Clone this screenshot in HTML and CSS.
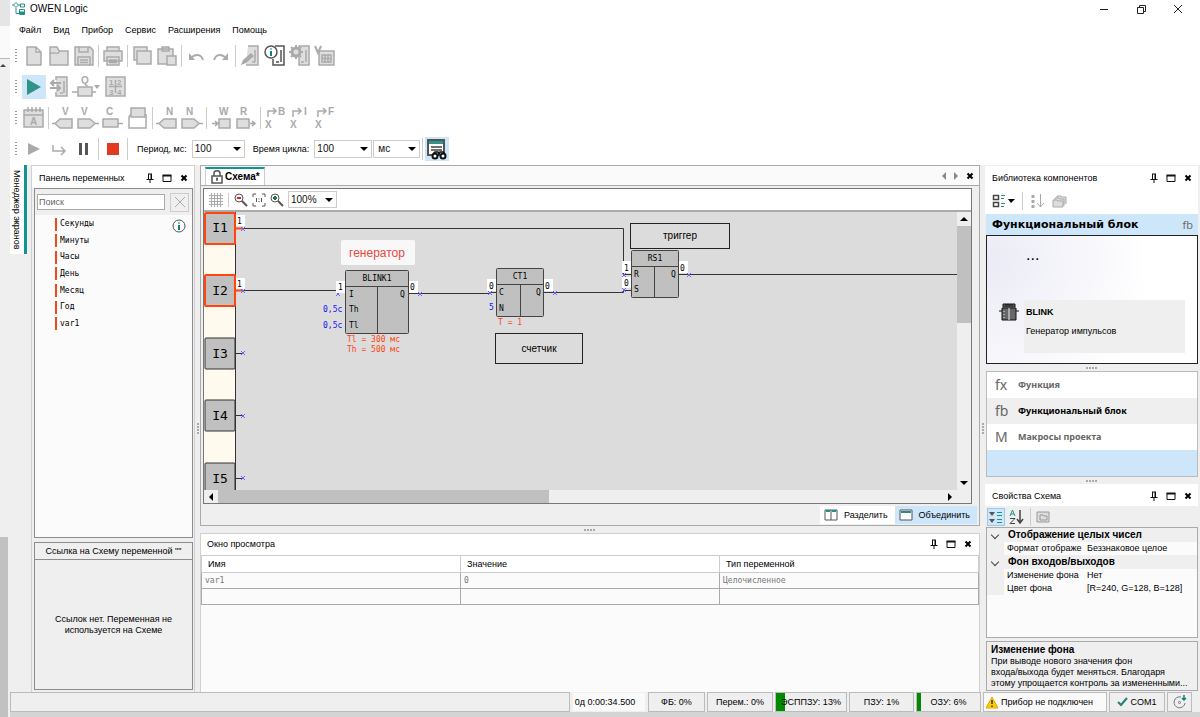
FILE: index.html
```html
<!DOCTYPE html>
<html lang="ru">
<head>
    <meta charset="UTF-8">
    <meta name="viewport" content="width=device-width, initial-scale=1.0">
    <title>OWEN Logic</title>
    <link rel="stylesheet" href="styles.css">
</head>
<body>
    <!-- shared icons -->
    <svg class="defs" width="0" height="0">
        <symbol id="pin" viewBox="0 0 10 10"><path d="M3 1h4M3.5 1v5M6.5 1v5M1.5 6.5h7M5 6.5V10" fill="none" stroke="#111"/><path d="M5.5 1h1v5h-1z" fill="#111"/></symbol>
        <symbol id="max" viewBox="0 0 10 10"><path d="M1 2.5h8v6H1z" fill="none" stroke="#111"/><path d="M.5 1.5h9v2h-9z" fill="#111"/></symbol>
        <symbol id="close" viewBox="0 0 10 10"><path d="M2.5 2.5l5 5M7.5 2.5l-5 5" stroke="#000" stroke-width="2"/></symbol>
        <symbol id="x" viewBox="0 0 6 6"><path d="M1 1l4 4M5 1L1 5" stroke="#66f"/></symbol>
    </svg>
    <div class="desktop">
        <div class="outer">
            <div class="outer-top"></div>
            <div class="outer-mid"></div>
            <svg class="outer-arrow" width="8" height="8"><path d="M0 6h6L3 3z" fill="#444"/></svg>
            <div class="outer-thumb"></div>
        </div>
        <div class="window">
            <header class="titlebar">
                <svg width="14" height="14" viewBox="0 0 14 14" fill="none" stroke="#259088"><path d="M4 .5L6.500 3 4 5.500 1.500 3zM0 3h1.500M6.500 3H8M8.500 2h4v3h-4zM4 6v5.500h3M7.500 7.500h5v5h-5z"/><path d="M8 10h4v2H8z" fill="#259088"/></svg>
                <span class="title">OWEN Logic</span>
                <button class="win-btn" aria-label="Свернуть"><svg width="12" height="12"><path d="M2 6.500h8" stroke="#222"/></svg></button>
                <button class="win-btn" aria-label="Восстановить"><svg width="12" height="12" fill="none" stroke="#222"><path d="M2.500 4.500h6v6h-6zM4.500 4V2.500h6v6H9"/></svg></button>
                <button class="win-btn" aria-label="Закрыть"><svg width="12" height="12"><path d="M2 2l8 8M10 2l-8 8" stroke="#222"/></svg></button>
            </header>
            <nav class="menu">
                <button>Файл</button>
                <button>Вид</button>
                <button>Прибор</button>
                <button>Сервис</button>
                <button>Расширения</button>
                <button>Помощь</button>
            </nav>

            <div class="toolbar">
                <span class="grip"></span>
                <button class="tool" aria-label="Новый"><svg viewBox="0 0 24 24"><path d="M5 3h9l5 5v13H5zM14 3v5h5"/></svg></button>
                <button class="tool" aria-label="Открыть"><svg viewBox="0 0 24 24"><path d="M3 21V3h7l2 4h9v14zM3 9h8l2-2"/></svg></button>
                <button class="tool" aria-label="Сохранить"><svg viewBox="0 0 24 24"><path d="M3 3h15l3 3v15H3zM7 3h9v5H7zM6 13h12v8H6zM8 16h8M8 18.500h8"/></svg></button>
                <span class="sep"></span>
                <button class="tool" aria-label="Печать"><svg viewBox="0 0 24 24"><path d="M6 3h12v4H6zM3 7h18v10H3zM6 13h12v8H6zM8 16h8M8 18.500h8"/></svg></button>
                <span class="sep"></span>
                <button class="tool" aria-label="Копировать"><svg viewBox="0 0 24 24"><path d="M4 3h13v13H4z"/><path d="M7 7h14v13H7z"/></svg></button>
                <button class="tool" aria-label="Вставить"><svg viewBox="0 0 24 24"><path d="M3 5h15v15H3zM7 3h7v4H7z"/><path d="M12 12h9v9h-9z"/></svg></button>
                <span class="sep"></span>
                <button class="tool" aria-label="Отменить"><svg viewBox="0 0 24 24"><path d="M19 16c-2-6-7-6-11-3" fill="none" stroke-width="2"/><path d="M5 9v7h6z" class="solid"/></svg></button>
                <button class="tool" aria-label="Повторить"><svg viewBox="0 0 24 24"><path d="M5 16c2-6 7-6 11-3" fill="none" stroke-width="2"/><path d="M19 9v7h-6z" class="solid"/></svg></button>
                <span class="sep"></span>
                <button class="tool" aria-label="Записать"><svg viewBox="0 0 24 24"><path d="M10 2h10v19H8M17 6v12M14 18h3"/><path d="M3 21l2-5 8-7 3 3-8 7z" class="solid"/></svg></button>
                <button class="tool dark" aria-label="Информация о приборе"><svg viewBox="0 0 24 24"><path d="M12 2h9v19H10v-6M18 6v12M13 18h3"/><circle cx="8" cy="8" r="6" fill="#fff"/><path d="M8 7v5M8 4.500v1" stroke="#108080" stroke-width="2"/></svg></button>
                <button class="tool" aria-label="Настройка прибора"><svg viewBox="0 0 24 24"><path d="M11 2h10v19H11zM18 6v12M13 18h3"/><circle cx="8" cy="8" r="4" stroke-width="3"/><path d="M8 1v3M8 12v3M1 8h3M12 8h3M3 3l2 2M11 11l2 2M13 3l-2 2M3 13l2-2" stroke-width="2"/></svg></button>
                <button class="tool" aria-label="Таблица переменных"><svg viewBox="0 0 24 24"><path d="M6 7h15v14H6zM9 11h9v7H9zM9 14.500h9M12 11v7M15 11v7"/><path d="M2 2l3 7 3-7" fill="none" stroke-width="2"/></svg></button>
            </div>
            <div class="toolbar">
                <span class="grip"></span>
                <button class="tool on" aria-label="Симуляция"><svg viewBox="0 0 24 24"><path d="M5 4l14 8-14 8z" class="teal"/></svg></button>
                <button class="tool" aria-label="Обмен"><svg viewBox="0 0 24 24"><path d="M9 5V2h11v19H9v-4M17 6v12M13 18h3"/><path d="M4 8h10M7 5L4 8l3 3M3 13h10M10 10l3 3-3 3" fill="none" stroke-width="2"/></svg></button>
                <button class="tool wide" aria-label="Выход"><svg viewBox="0 0 30 24"><path d="M0 17h6M19 17h5"/><path d="M6 12h14v9H6z"/><path d="M22 10h6l-3 4z" class="solid"/><text x="9" y="9">Q</text></svg></button>
                <button class="tool" aria-label="Разряды"><svg viewBox="0 0 24 24"><path d="M3 2h19v19H3zM12.500 5v13M6 11.500h13"/><g class="small"><text x="6" y="10">1</text><text x="14" y="10">2</text><text x="6" y="20">3</text><text x="14" y="20">4</text></g></svg></button>
            </div>
            <div class="toolbar">
                <span class="grip"></span>
                <button class="tool" aria-label="Календарь"><svg viewBox="0 0 24 24"><path d="M2 4h19v17H2zM2 9h19M6 1v5M10 1v5M14 1v5M18 1v5"/><text x="8" y="19">A</text></svg></button>
                <span class="sep"></span>
                <button class="tool" aria-label="Входная переменная"><svg viewBox="0 0 24 24"><path d="M21 13H9l-5 4.500L9 22h12zM1 17.500h3"/><text x="11" y="9">V</text></svg></button>
                <button class="tool" aria-label="Выходная переменная"><svg viewBox="0 0 24 24"><path d="M2 13h12l5 4.500-5 4.500H2zM19 17.500h4"/><text x="5" y="9">V</text></svg></button>
                <button class="tool" aria-label="Константа"><svg viewBox="0 0 24 24"><path d="M2 13h15v8H2zM17 17.500h5"/><text x="5" y="9">C</text></svg></button>
                <button class="tool" aria-label="Комментарий"><svg viewBox="0 0 24 24"><path d="M5 8L3 11v11h17V8" fill="#fff"/><path d="M5 2h14v9H5z"/></svg></button>
                <span class="sep"></span>
                <button class="tool" aria-label="Сетевой вход"><svg viewBox="0 0 24 24"><path d="M21 13H9l-5 4.500L9 22h12zM1 17.500h3"/><text x="11" y="9">N</text></svg></button>
                <button class="tool" aria-label="Сетевой выход"><svg viewBox="0 0 24 24"><path d="M2 13h12l5 4.500-5 4.500H2zM19 17.500h4"/><text x="6" y="9">N</text></svg></button>
                <span class="sep"></span>
                <button class="tool" aria-label="Запись"><svg viewBox="0 0 24 24"><path d="M10 13h11v9H10zM3 17.500h6M6 15l3 2.500L6 20"/><text x="10" y="9">W</text></svg></button>
                <button class="tool" aria-label="Чтение"><svg viewBox="0 0 24 24"><path d="M3 13h12v9H3zM16 17.500h5M18 15l3 2.500-3 2.500"/><text x="6" y="9">R</text></svg></button>
                <span class="sep"></span>
                <button class="tool" aria-label="Преобразовать в BOOL"><svg viewBox="0 0 24 24"><path d="M5 11V5h8M10 2l3 3-3 3" fill="none"/><text x="15" y="9">B</text><text x="2" y="22">X</text></svg></button>
                <button class="tool" aria-label="Преобразовать в INT"><svg viewBox="0 0 24 24"><path d="M5 11V5h8M10 2l3 3-3 3" fill="none"/><text x="16" y="9">I</text><text x="2" y="22">X</text></svg></button>
                <button class="tool" aria-label="Преобразовать в FLOAT"><svg viewBox="0 0 24 24"><path d="M5 11V5h8M10 2l3 3-3 3" fill="none"/><text x="15" y="9">F</text><text x="2" y="22">X</text></svg></button>
            </div>
            <div class="toolbar">
                <span class="grip"></span>
                <button class="tool" aria-label="Пуск"><svg viewBox="0 0 24 24"><path d="M6 6l12 6-12 6z" class="solid"/></svg></button>
                <button class="tool" aria-label="Шаг"><svg viewBox="0 0 24 24"><path d="M6 8v6h12M14 10l4 4-4 4" fill="none"/></svg></button>
                <button class="tool" aria-label="Пауза"><svg viewBox="0 0 24 24"><path d="M8.500 6v12M14.500 6v12" stroke="#555" stroke-width="3"/></svg></button>
                <span class="sep"></span>
                <button class="tool" aria-label="Стоп"><svg viewBox="0 0 24 24"><path d="M6 6h12v12H6z" class="red"/></svg></button>
                <span class="sep"></span>
                <label class="tool-label" for="period">Период, мс:</label>
                <select id="period" class="combo period"><option>100</option></select>
                <label class="tool-label" for="cycle">Время цикла:</label>
                <select id="cycle" class="combo cycle"><option>100</option></select>
                <select class="combo unit" aria-label="Единица времени"><option>мс</option></select>
                <span class="sep"></span>
                <button class="tool on" aria-label="Окно просмотра"><svg viewBox="0 0 24 24"><path d="M3 3h16v15H3z" fill="#fff" stroke="#555" stroke-width="2"/><path d="M4 4h14v3H4z" class="teal"/><path d="M6 10h11M6 13h11" stroke="#444"/><path d="M8 17l2-2h3l1 2 1-2h3l2 2" fill="none" stroke="#111"/><circle cx="10" cy="19" r="2.500" fill="#fff" stroke="#111" stroke-width="2"/><circle cx="18" cy="19" r="2.500" fill="#fff" stroke="#111" stroke-width="2"/></svg></button>
            </div>

            <main class="main">
                <button class="side-tab">Менеджер экранов</button>

                <section class="dock vars">
                    <div class="panel-head">
                        <h2>Панель переменных</h2>
                        <button aria-label="Закрепить"><svg><use href="#pin"/></svg></button>
                        <button aria-label="Развернуть"><svg><use href="#max"/></svg></button>
                        <button aria-label="Закрыть"><svg><use href="#close"/></svg></button>
                    </div>
                    <div class="box var-box">
                        <div class="search">
                            <input type="text" placeholder="Поиск" aria-label="Поиск">
                            <button class="clear" aria-label="Очистить"><svg width="14" height="14"><path d="M2 2l10 10M12 2L2 12" stroke="#aaa"/></svg></button>
                        </div>
                        <div class="var-body">
                            <ul class="var-list">
                                <li>Секунды</li>
                                <li>Минуты</li>
                                <li>Часы</li>
                                <li>День</li>
                                <li>Месяц</li>
                                <li>Год</li>
                                <li>var1</li>
                            </ul>
                            <svg width="14" height="14" viewBox="0 0 14 14"><circle cx="7" cy="7" r="6" fill="none" stroke="#555"/><path d="M7 6v5M7 3.500v1" stroke="#108070" stroke-width="2"/></svg>
                        </div>
                    </div>
                    <div class="box link-box">
                        <h3>Ссылка на Схему переменной ""</h3>
                        <p>Ссылок нет. Переменная не используется на Схеме</p>
                    </div>
                </section>
                <span class="split-v"></span>

                <div class="center">
                    <section class="scheme">
                        <div class="tabs">
                            <button class="tab"><svg width="12" height="14" viewBox="0 0 12 14" fill="none" stroke="#555" stroke-width="1.500"><path d="M1 6h10v7H1zM3 6V3c0-3 6-3 6 0v3M6 8v3M5 8.500h2"/></svg>Схема*</button>
                            <button class="nav" aria-label="Назад"><svg width="6" height="8"><path d="M5 0v8L1 4z" fill="#888"/></svg></button>
                            <button class="nav" aria-label="Вперёд"><svg width="6" height="8"><path d="M1 0v8l4-4z" fill="#888"/></svg></button>
                            <button class="nav" aria-label="Закрыть"><svg width="10" height="10"><use href="#close"/></svg></button>
                        </div>
                        <div class="editor">
                            <div class="zoombar">
                                <button aria-label="Сетка"><svg width="14" height="14"><path d="M2.500 0v14M5.500 0v14M8.500 0v14M11.500 0v14M0 2.500h14M0 5.500h14M0 8.500h14M0 11.500h14" stroke="#aaa"/></svg></button>
                                <span class="sep"></span>
                                <button aria-label="Уменьшить"><svg width="14" height="14"><circle cx="5" cy="5" r="4" fill="#fff" stroke="#555"/><path d="M8 8l5 5" stroke="#555" stroke-width="2"/><path d="M3 5h4" stroke="#d22" stroke-width="2"/></svg></button>
                                <button aria-label="Масштаб 1:1"><svg width="14" height="14"><path d="M1 4V1h3M10 1h3v3M13 10v3h-3M4 13H1v-3M4.500 5v4M9.500 5v4M7 5.500v1M7 8v1" fill="none" stroke="#555"/></svg></button>
                                <button aria-label="Увеличить"><svg width="14" height="14"><circle cx="5" cy="5" r="4" fill="#fff" stroke="#555"/><path d="M8 8l5 5" stroke="#555" stroke-width="2"/><path d="M3 5h4M5 3v4" stroke="#187a40" stroke-width="2"/></svg></button>
                                <select class="combo zoom" aria-label="Масштаб"><option>100%</option></select>
                            </div>
                            <div class="stage">
                                <svg class="canvas">
                                    <rect width="31" height="300" fill="#fff9ee"/>
                                    <path class="wire" d="M31.500 0v300"/>
                                    <!-- wires -->
                                    <path class="wire" d="M39 16.500H419.500V62.500H427M32 78.500H141M204 81.500H286L287 80.500H292M340 80.500H419.500V78.500H427M474 62.500H753M32 141.500h8M32 203.500h8M32 266.500h8"/>
                                    <path class="hot" d="M32 16.500h7M32 78.500h7"/>
                                    <g>
                                        <use href="#x" x="36" y="14" width="6" height="6"/>
                                        <use href="#x" x="36" y="76" width="6" height="6"/>
                                        <use href="#x" x="36" y="138" width="6" height="6"/>
                                        <use href="#x" x="36" y="201" width="6" height="6"/>
                                        <use href="#x" x="36" y="263" width="6" height="6"/>
                                        <use href="#x" x="131" y="79" width="6" height="6"/>
                                        <use href="#x" x="213" y="79" width="6" height="6"/>
                                        <use href="#x" x="283" y="78" width="6" height="6"/>
                                        <use href="#x" x="348" y="78" width="6" height="6"/>
                                        <use href="#x" x="417" y="60" width="6" height="6"/>
                                        <use href="#x" x="417" y="75" width="6" height="6"/>
                                        <use href="#x" x="482" y="60" width="6" height="6"/>
                                    </g>
                                    <!-- inputs -->
                                    <g class="pin active"><rect x="1" y="1" width="30" height="31" rx="1"/><text x="16" y="20">I1</text></g>
                                    <g class="pin active"><rect x="1" y="63" width="30" height="31" rx="1"/><text x="16" y="83">I2</text></g>
                                    <g class="pin"><rect x="1" y="126" width="30" height="31" rx="1"/><text x="16" y="146">I3</text></g>
                                    <g class="pin"><rect x="1" y="188" width="30" height="31" rx="1"/><text x="16" y="208">I4</text></g>
                                    <g class="pin"><rect x="1" y="251" width="30" height="31" rx="1"/><text x="16" y="271">I5</text></g>
                                    <!-- blocks -->
                                    <g class="block">
                                        <rect x="141.500" y="58.500" width="63" height="63" rx="1"/><path d="M142 74.500h62M173.500 75v46"/>
                                        <text x="173" y="69" class="mid">BLINK1</text><text x="145" y="85">I</text><text x="145" y="100">Th</text><text x="145" y="116">Tl</text><text x="196" y="85">Q</text>
                                    </g>
                                    <g class="block">
                                        <rect x="292.500" y="56.500" width="47" height="48" rx="1"/><path d="M293 72.500h46M316.500 73v31"/>
                                        <text x="316" y="67" class="mid">CT1</text><text x="295" y="83">C</text><text x="295" y="99">N</text><text x="332" y="83">Q</text>
                                    </g>
                                    <g class="block">
                                        <rect x="427.500" y="38.500" width="47" height="47" rx="1"/><path d="M428 54.500h46M450.500 55v30"/>
                                        <text x="451" y="49" class="mid">RS1</text><text x="430" y="65">R</text><text x="430" y="80">S</text><text x="467" y="65">Q</text>
                                    </g>
                                    <!-- values -->
                                    <g class="value">
                                        <rect x="32" y="3" width="9" height="11"/><text x="33" y="12">1</text>
                                        <rect x="32" y="66" width="9" height="11"/><text x="33" y="75">1</text>
                                        <rect x="132" y="69" width="9" height="12"/><text x="134" y="78">1</text>
                                        <rect x="205" y="69" width="9" height="12"/><text x="206" y="78">0</text>
                                        <rect x="283" y="67" width="9" height="12"/><text x="285" y="77">0</text>
                                        <rect x="340" y="67" width="9" height="12"/><text x="341" y="77">0</text>
                                        <rect x="418" y="49" width="9" height="12"/><text x="420" y="59">1</text>
                                        <rect x="418" y="65" width="9" height="11"/><text x="420" y="74">0</text>
                                        <rect x="475" y="49" width="9" height="12"/><text x="476" y="59">0</text>
                                    </g>
                                    <g class="const"><text x="119" y="100">0,5с</text><text x="119" y="116">0,5с</text><text x="285" y="98">5</text></g>
                                    <g class="state"><text x="143" y="130">Tl = 300 мс</text><text x="143" y="140">Th = 500 мс</text><text x="294" y="113">T = 1</text></g>
                                    <!-- comments -->
                                    <g class="note"><rect x="426.500" y="11.500" width="99" height="25"/><text x="476" y="27">триггер</text></g>
                                    <g class="note"><rect x="291.500" y="121.500" width="87" height="30"/><text x="335" y="140">счетчик</text></g>
                                    <g class="callout"><rect x="137" y="28" width="74" height="25" rx="2"/><text x="173" y="45">генератор</text></g>
                                </svg>
                                <div class="scroll-v">
                                    <svg width="14" height="14"><path d="M3 9h8L7 5z"/></svg>
                                    <span></span>
                                    <svg width="14" height="14"><path d="M3 5h8L7 9z"/></svg>
                                </div>
                            </div>
                            <div class="scroll-h">
                                <svg width="14" height="14"><path d="M9 3v8L5 7z"/></svg>
                                <span></span>
                                <svg width="14" height="14"><path d="M5 3v8l4-4z"/></svg>
                            </div>
                        </div>
                        <div class="modes">
                            <button><svg width="14" height="12" fill="#fff" stroke="#555"><path d="M1 1h12v10H1zM7 1v10"/><path d="M2 2h4M8 2h4" stroke="#259088" stroke-width="2"/></svg>Разделить</button>
                            <button class="on"><svg width="14" height="12" fill="#fff" stroke="#555"><path d="M1 1h12v10H1z"/><path d="M2 3h10" stroke="#259088" stroke-width="2"/></svg>Объединить</button>
                        </div>
                    </section>
                    <span class="split-h"></span>
                    <section class="watch">
                        <div class="panel-head">
                            <h2>Окно просмотра</h2>
                            <button aria-label="Закрепить"><svg><use href="#pin"/></svg></button>
                            <button aria-label="Развернуть"><svg><use href="#max"/></svg></button>
                            <button aria-label="Закрыть"><svg><use href="#close"/></svg></button>
                        </div>
                        <table>
                            <thead><tr><th>Имя</th><th>Значение</th><th>Тип переменной</th></tr></thead>
                            <tbody>
                                <tr><td>var1</td><td>0</td><td>Целочисленное</td></tr>
                                <tr><td></td><td></td><td></td></tr>
                            </tbody>
                        </table>
                    </section>
                </div>
                <span class="split-v"></span>

                <div class="right">
                    <section class="library">
                        <div class="panel-head">
                            <h2>Библиотека компонентов</h2>
                            <button aria-label="Закрепить"><svg><use href="#pin"/></svg></button>
                            <button aria-label="Развернуть"><svg><use href="#max"/></svg></button>
                            <button aria-label="Закрыть"><svg><use href="#close"/></svg></button>
                        </div>
                        <div class="mini-bar">
                            <button aria-label="Вид"><svg width="24" height="16" fill="none"><path d="M2.500 2.500h5v4h-5zM2.500 9.500h5v4h-5z" stroke="#444" stroke-width="1.500"/><path d="M10 2.500h4M10 5.500h3M10 10.500h4M10 13.500h3" stroke="#259088"/><path d="M17 6h7l-4 4z" fill="#000"/></svg></button>
                            <span class="sep"></span>
                            <button aria-label="Сортировка"><svg width="16" height="16" fill="none" stroke="#aaa"><path d="M3 2v3M3 7v3M3 12v3" stroke-width="3"/><path d="M10.500 1v13M7 10l3.500 4 3.500-4"/></svg></button>
                            <button aria-label="Папки"><svg width="16" height="16" fill="#ddd" stroke="#aaa"><path d="M5 8V3h4l1 1h4v7"/><path d="M3 9V5h4l1 1h4v7"/><path d="M1 14V7h4l1 1h5v6z"/></svg></button>
                        </div>
                        <div class="lib-title"><strong>Функциональный блок</strong><span>fb</span></div>
                        <div class="lib-list">
                            <p class="dots">...</p>
                            <div class="lib-item">
                                <svg width="20" height="20" viewBox="0 0 20 20"><path d="M4 1h12v3H4zM3 5h14v12H3z" fill="#666" stroke="#111"/><path d="M0 8h3M17 8h3M6 2h8" stroke="#111"/><path d="M10 5v12M5 8v1M5 11v1M5 14v1" stroke="#eee"/></svg>
                                <div><strong>BLINK</strong><span>Генератор импульсов</span></div>
                            </div>
                        </div>
                        <span class="split-h"></span>
                        <ul class="kinds">
                            <li><i>fx</i><b>Функция</b></li>
                            <li class="current"><i>fb</i><b>Функциональный блок</b></li>
                            <li><i>M</i><b>Макросы проекта</b></li>
                            <li class="fill"></li>
                        </ul>
                    </section>
                    <span class="split-h"></span>
                    <section class="props">
                        <div class="panel-head">
                            <h2>Свойства Схема</h2>
                            <button aria-label="Закрепить"><svg><use href="#pin"/></svg></button>
                            <button aria-label="Развернуть"><svg><use href="#max"/></svg></button>
                            <button aria-label="Закрыть"><svg><use href="#close"/></svg></button>
                        </div>
                        <div class="mini-bar grey">
                            <button class="on" aria-label="По категориям"><svg width="16" height="16"><path d="M1 3h6L4 7zM1 10h6l-3 4z" fill="#555"/><path d="M9 3.500h5M9 6.500h5M9 10.500h5M9 13.500h5" stroke="#259088"/></svg></button>
                            <button aria-label="По алфавиту"><svg width="16" height="16" fill="none" stroke="#444"><path d="M1 7l2.500-6L6 7M2 5h3" stroke="#259088"/><path d="M1 9.500h5l-5 5h5"/><path d="M11 1v12M8 10l3 4 3-4" stroke-width="1.500"/></svg></button>
                            <span class="sep"></span>
                            <button aria-label="Страницы"><svg width="14" height="14" fill="#ddd" stroke="#999"><path d="M1 2h12v10H1zM4 9V5h3l1 1h3v4H4z"/></svg></button>
                        </div>
                        <div class="prop-grid">
                            <h3>Отображение целых чисел</h3>
                            <dl><dt>Формат отображе</dt><dd>Беззнаковое целое</dd></dl>
                            <h3>Фон входов/выходов</h3>
                            <dl><dt>Изменение фона</dt><dd>Нет</dd></dl>
                            <dl><dt>Цвет фона</dt><dd>[R=240, G=128, B=128]</dd></dl>
                        </div>
                        <div class="hint">
                            <strong>Изменение фона</strong>
                            <p>При выводе нового значения фон<br>входа/выхода будет меняться. Благодаря<br>этому упрощается контроль за измененными...</p>
                        </div>
                    </section>
                </div>
            </main>

            <footer class="status">
                <span class="cell message"></span>
                <span class="cell time">0д 0:00:34.500</span>
                <span class="cell fb">ФБ: 0%</span>
                <span class="cell var">Перем.: 0%</span>
                <span class="cell eeprom"><span class="meter" style="width: 13%"></span>ЭСППЗУ: 13%</span>
                <span class="cell rom">ПЗУ: 1%</span>
                <span class="cell ram"><span class="meter" style="width: 6%"></span>ОЗУ: 6%</span>
                <span class="cell device"><svg width="14" height="13"><path d="M7 1l6 11H1z" fill="#fc0" stroke="#e5a800"/><path d="M7 4v4M7 9.500v1.500" stroke="#333" stroke-width="1.500"/></svg>Прибор не подключен</span>
                <span class="cell port"><svg width="11" height="10"><path d="M1 5l3 3 6-7" fill="none" stroke="#258078" stroke-width="2"/></svg>COM1</span>
                <span class="cell sync"><svg width="14" height="14" fill="none" stroke="#777"><path d="M12 8a5.500 5.500 0 1 1-4-6"/><circle cx="6.500" cy="7.500" r="1"/><path d="M11 0v5M9 3l2 2 2-2" stroke="#108080" stroke-width="1.500"/></svg></span>
            </footer>
            <div class="below"></div>
        </div>
    </div>
</body>
</html>
```
FILE: styles.css
```css
* {
    box-sizing: border-box;
}
body {
    margin: 0;
    font-family: "Liberation Sans", Arial, sans-serif;
    font-size: 9px;
    line-height: 12px;
    color: #000;
    background: #fff;
}
h2, h3, p, ul, dl, dd {
    margin: 0;
    padding: 0;
    font-size: 9px;
    font-weight: normal;
}
ul {
    list-style: none;
}
button {
    display: flex;
    align-items: center;
    justify-content: center;
    margin: 0;
    padding: 0;
    border: 0;
    background: none;
    font: inherit;
    color: inherit;
}
svg {
    flex: none;
    display: block;
}
.defs {
    position: absolute;
}
.desktop {
    display: flex;
    height: 100vh;
    overflow: hidden;
}

/* window behind, seen at the left edge */
.outer {
    width: 10px;
    flex: none;
    display: flex;
    flex-direction: column;
    background: #efefef;
}
.outer-top {
    height: 26px;
    background: #e5e5e5;
}
.outer-mid {
    height: 33px;
    background: #fafafa;
    border-bottom: 1px solid #bbb;
}
.outer-arrow {
    margin-top: 2px;
}
.outer-thumb {
    width: 8px;
    height: 180px;
    margin-top: auto;
    background: #c1c1c1;
}
.window {
    flex: 1;
    min-width: 0;
    display: flex;
    flex-direction: column;
}

/* title and menu */
.titlebar {
    display: flex;
    align-items: center;
    height: 20px;
    padding: 0 4px 2px 2px;
    font-size: 10px;
}
.title {
    flex: 1;
    margin-left: 4px;
}
.win-btn {
    width: 37px;
    height: 18px;
}
.menu {
    display: flex;
    gap: 12px;
    height: 20px;
    padding-left: 9px;
}

/* toolbars */
.toolbar {
    display: flex;
    align-items: center;
    gap: 1px;
    height: 31px;
    padding-left: 5px;
}
.grip {
    width: 2px;
    height: 14px;
    margin-right: 4px;
    background: repeating-linear-gradient(#999 0 1px, #fff 1px 3px);
}
.sep {
    flex: none;
    width: 1px;
    height: 22px;
    margin: 0 1px;
    background: #ccc;
}
.tool {
    width: 24px;
    height: 24px;
}
.tool svg {
    width: 24px;
    height: 24px;
    fill: #dedede;
    stroke: #aaa;
    stroke-width: 1.5;
}
.tool.wide {
    width: 30px;
}
.tool.wide svg {
    width: 30px;
}
.tool.dark svg {
    fill: #fff;
    stroke: #555;
}
.tool.on, .mini-bar .on {
    background: #cde6f9;
}
.tool .solid {
    fill: #aaa;
    stroke: none;
}
.tool .teal {
    fill: #2f9488;
    stroke: none;
}
.tool .red {
    fill: #e23a20;
    stroke: none;
}
.tool text {
    font-size: 10px;
    font-weight: bold;
    fill: #aaa;
    stroke: none;
}
.tool .small text {
    font-size: 8px;
}
.tool-label {
    margin: 0 4px 0 7px;
}
.combo {
    height: 18px;
    padding: 0 2px;
    border: 1px solid #ccc;
    border-radius: 0;
    appearance: none;
    font: inherit;
    font-size: 10px;
    color: #111;
    background: #fff url("data:image/svg+xml,%3Csvg xmlns='http://www.w3.org/2000/svg' width='8' height='4'%3E%3Cpath d='M0 0h8L4 4z'/%3E%3C/svg%3E") no-repeat right 3px center;
}
.period {
    width: 53px;
}
.cycle {
    width: 58px;
}
.unit {
    width: 47px;
    padding-left: 4px;
}

/* docking area */
.main {
    flex: 1;
    min-height: 0;
    display: flex;
    align-items: stretch;
    margin-top: 1px;
    background: #efefef;
}
.side-tab {
    width: 17px;
    height: 89px;
    flex: none;
    margin-right: 4px;
    border-right: 3px solid #109490;
    background: #fff;
    writing-mode: vertical-rl;
    line-height: 14px;
    white-space: nowrap;
}
.dock, .scheme, .watch {
    border: 1px solid #d0d0d0;
    border-bottom: 0;
}
.panel-head {
    display: flex;
    align-items: center;
    gap: 7px;
    height: 22px;
    flex: none;
    padding: 1px 5px 0 7px;
    background: #fff;
}
.panel-head h2 {
    flex: 1;
    white-space: nowrap;
}
.panel-head svg {
    width: 10px;
    height: 10px;
}
.box {
    border: 1px solid #8c8c8c;
    background: #fbfbfb;
}
.split-v {
    width: 5px;
    flex: none;
    align-self: center;
    height: 12px;
    background: repeating-linear-gradient(#aaa 0 2px, #efefef 2px 3px) center / 2px 12px no-repeat;
}
.split-h {
    display: block;
    flex: none;
    height: 7px;
    background: repeating-linear-gradient(90deg, #aaa 0 2px, #efefef 2px 3px) center / 12px 2px no-repeat;
}

/* variables */
.vars {
    display: flex;
    flex-direction: column;
    gap: 4px;
    width: 164px;
    flex: none;
    padding-bottom: 2px;
}
.vars .panel-head {
    margin-bottom: -4px;
}
.var-box {
    flex: 1;
    margin: 0 1px 0 2px;
}
.search {
    display: flex;
    justify-content: space-between;
    align-items: center;
    gap: 5px;
    height: 26px;
    padding: 0 3px 0 2px;
    background: #efefef;
}
.search input {
    flex: 1;
    min-width: 0;
    height: 16px;
    padding: 0 1px;
    border: 1px solid #aaa;
    font: inherit;
}
.search input::placeholder {
    color: #666;
}
.clear {
    width: 19px;
    height: 19px;
    border: 1px solid #ccc;
}
.var-body {
    display: flex;
    justify-content: space-between;
    padding: 1px 6px 0 20px;
}
.var-body svg {
    margin-top: 3px;
}
.var-list {
    display: grid;
    grid-auto-rows: 1fr;
    height: 116px;
    font-family: "DejaVu Sans Mono", monospace;
    font-size: 8px;
}
.var-list li {
    display: flex;
    align-items: center;
}
.var-list li::before {
    content: "";
    width: 2px;
    height: 13px;
    margin-right: 3px;
    background: #f04a1c;
}
.link-box {
    display: flex;
    flex-direction: column;
    height: 148px;
    margin: 0 1px 0 2px;
    background: #efefef;
    text-align: center;
}
.link-box h3 {
    height: 17px;
    border-bottom: 1px solid #8c8c8c;
    line-height: 17px;
    white-space: nowrap;
}
.link-box p {
    margin: auto 16px;
    line-height: 11px;
}

/* scheme editor */
.center {
    flex: 1;
    min-width: 0;
    display: flex;
    flex-direction: column;
}
.scheme {
    flex: 1;
    min-height: 0;
    display: flex;
    flex-direction: column;
    border: 1px solid #aaa;
}
.tabs {
    display: flex;
    align-items: center;
    gap: 6px;
    height: 20px;
    flex: none;
    padding: 1px 4px 0 4px;
    border-bottom: 1px solid #aaa;
    background: #fafafa;
}
.tab {
    height: 18px;
    gap: 2px;
    margin-right: auto;
    padding: 0 4px 0 5px;
    border: 1px solid #ccc;
    border-top: 2px solid #109490;
    border-bottom: 0;
    background: #fff;
    font-size: 10px;
    font-weight: bold;
}
.editor {
    flex: 1;
    min-height: 0;
    display: flex;
    flex-direction: column;
    margin: 2px 7px 0 2px;
    border: 1px solid #777;
}
.zoombar {
    display: flex;
    align-items: center;
    gap: 4px;
    height: 23px;
    flex: none;
    padding-left: 5px;
    border-bottom: 2px solid #aaa;
    background: #fff;
}
.zoombar .sep {
    height: 14px;
}
.zoom {
    width: 49px;
    height: 17px;
}
.stage {
    flex: 1;
    min-height: 0;
    display: flex;
    background: #dcdcdc;
}
.canvas {
    flex: 1;
    min-width: 0;
    height: 100%;
    overflow: hidden;
    font-family: "DejaVu Sans Mono", monospace;
    font-size: 8px;
}
.wire {
    fill: none;
    stroke: #333;
}
.hot {
    stroke: #ff4510;
    stroke-width: 2;
}
.pin rect {
    fill: #c0c0c0;
    stroke: #333;
}
.pin.active rect {
    stroke: #ff4510;
    stroke-width: 2;
}
.pin text {
    font-size: 13px;
    text-anchor: middle;
}
.block rect {
    fill: #c0c0c0;
}
.block rect, .block path {
    stroke: #444;
}
.mid {
    text-anchor: middle;
}
.value rect {
    fill: #fff;
}
.const {
    fill: #11e;
}
.state {
    fill: #ff4510;
}
.note {
    font-family: "Liberation Sans", Arial, sans-serif;
    font-size: 10px;
    text-anchor: middle;
}
.note rect {
    fill: #dcdcdc;
    stroke: #222;
}
.callout {
    font-family: "Liberation Sans", Arial, sans-serif;
    font-size: 12px;
    text-anchor: middle;
    fill: #e8483c;
}
.callout rect {
    fill: #f8f8f8;
}
.scroll-v, .scroll-h {
    flex: none;
    display: flex;
    background: #efefef;
}
.scroll-v {
    width: 14px;
    flex-direction: column;
}
.scroll-v span {
    height: 97px;
    margin-bottom: auto;
    background: #c0c0c0;
}
.scroll-h {
    height: 13px;
    padding-right: 14px;
}
.scroll-h span {
    width: 44%;
    margin-right: auto;
    background: #c0c0c0;
}
.modes {
    display: flex;
    justify-content: flex-end;
    height: 21px;
    flex: none;
    padding: 2px 2px 1px 0;
}
.modes button {
    gap: 6px;
    padding: 0 7px 0 4px;
    background: #fff;
}
.modes .on {
    background: #cde6f9;
}

/* watch window */
.watch {
    height: 159px;
    flex: none;
    background: #fbfbfb;
}
.watch .panel-head {
    height: 21px;
    padding: 0 6px 1px;
}
.watch table {
    width: 100%;
    border-collapse: collapse;
    table-layout: fixed;
}
.watch th, .watch td {
    height: 16px;
    padding: 0 3px;
    border: 1px solid #aaa;
    text-align: left;
    font-weight: normal;
}
.watch th {
    height: 17px;
    padding-left: 6px;
    border-color: #ccc;
    background: #fff;
}
.watch td {
    font-family: "DejaVu Sans Mono", monospace;
    font-size: 8px;
    color: #777;
}

/* right column */
.right {
    display: flex;
    flex-direction: column;
    width: 215px;
    flex: none;
    padding: 1px 2px 0 0;
}
.mini-bar {
    display: flex;
    align-items: center;
    gap: 6px;
    height: 26px;
    padding-left: 6px;
    background: #fff;
}
.mini-bar.grey {
    gap: 4px;
    height: 21px;
    padding-left: 2px;
    background: #efefef;
}
.mini-bar .sep {
    height: 18px;
}
.lib-title {
    display: flex;
    justify-content: space-between;
    align-items: center;
    height: 21px;
    margin-left: 1px;
    padding: 0 5px 0 6px;
    background: #cde6f9;
    font-family: "DejaVu Sans", sans-serif;
}
.lib-title strong {
    font-size: 11px;
}
.lib-title span {
    font-family: "Open Sans", sans-serif;
    font-size: 11px;
    color: #666;
}
.lib-list {
    display: flex;
    flex-direction: column;
    justify-content: space-between;
    height: 129px;
    margin-left: 1px;
    padding: 13px 12px 10px;
    border: 1px solid #222;
    background: radial-gradient(circle at 0 20%, #ebebf6, #fff 70%);
}
.dots {
    padding-left: 27px;
    font-size: 16px;
}
.lib-item {
    display: flex;
    gap: 5px;
}
.lib-item svg {
    margin-top: 3px;
}
.lib-item div {
    flex: 1;
    display: flex;
    flex-direction: column;
    gap: 7px;
    height: 53px;
    padding: 6px 2px;
    background: #efefef;
}
.kinds {
    margin-left: 1px;
    border: 1px solid #bbb;
}
.kinds li {
    display: flex;
    align-items: center;
    height: 26px;
    padding-left: 8px;
    background: #fff;
    font-family: "Noto Sans", sans-serif;
    color: #666;
}
.kinds i {
    width: 23px;
    font-style: normal;
    font-size: 14px;
    color: #666;
}
.kinds b {
    font-size: 9px;
}
.kinds .current {
    background: #efefef;
    color: #000;
}
.kinds .fill {
    background: #cde6f9;
}
.props {
    flex: 1;
    min-height: 0;
    display: flex;
    flex-direction: column;
}
.mini-bar .on {
    border: 1px solid #9cc8ea;
}
.prop-grid {
    flex: 1;
    margin: 0 0 3px 1px;
    border: 1px solid #aaa;
    background: #fbfbfb;
}
.prop-grid h3 {
    display: flex;
    align-items: center;
    gap: 10px;
    height: 14px;
    padding-left: 5px;
    background: #efefef;
    font-size: 10px;
    font-weight: bold;
}
.prop-grid h3::before {
    content: "";
    width: 5px;
    height: 5px;
    border: solid #444;
    border-width: 0 1px 1px 0;
    transform: rotate(45deg);
}
.prop-grid dl {
    display: grid;
    grid-template-columns: 80px 1fr;
    height: 13px;
    border-left: 17px solid #efefef;
    line-height: 13px;
}
.prop-grid dt {
    padding-left: 3px;
    white-space: nowrap;
}
.prop-grid dd {
    padding-left: 3px;
}
.hint {
    height: 50px;
    flex: none;
    margin: 0 0 1px 1px;
    padding: 2px 4px;
    border: 1px solid #aaa;
    line-height: 11px;
    white-space: nowrap;
}
.hint strong {
    font-size: 10px;
}

/* status bar */
.status {
    display: flex;
    height: 20px;
    flex: none;
    gap: 2px;
    padding-right: 8px;
    background: #efefef;
}
.cell {
    position: relative;
    display: flex;
    align-items: center;
    justify-content: center;
    gap: 2px;
    border: 1px solid #bbb;
    white-space: nowrap;
}
.message {
    flex: 1;
}
.time {
    width: 74px;
    padding-right: 8px;
    border-color: #efefef;
    background: #fafafa;
}
.fb {
    width: 57px;
}
.var {
    width: 66px;
}
.eeprom {
    width: 72px;
}
.rom {
    width: 65px;
}
.ram {
    width: 65px;
}
.device {
    width: 124px;
    justify-content: flex-start;
    padding-left: 1px;
    background: #fafafa;
}
.port {
    width: 56px;
}
.sync {
    width: 25px;
}
.meter {
    position: absolute;
    left: 0;
    top: 0;
    bottom: 0;
    background: #008a00;
    z-index: -1;
}
.eeprom, .ram {
    z-index: 0;
}
.below {
    height: 5px;
    flex: none;
    background: #d4d4d4;
}
```
